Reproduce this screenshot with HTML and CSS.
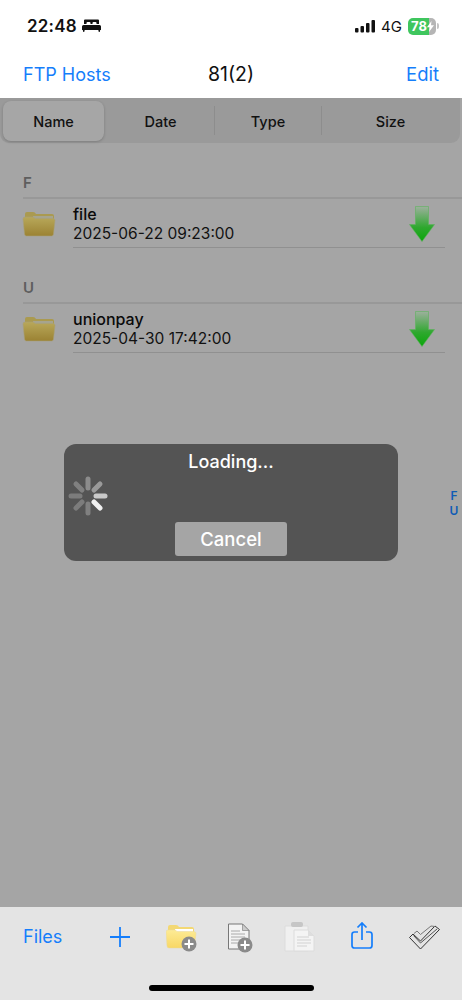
FILE: index.html
```html
<!DOCTYPE html>
<html lang="en">
<head>
<meta charset="utf-8">
<title>FTP</title>
<link rel="stylesheet" href="styles.css">
</head>
<body>
<div class="app">
  <header class="status">
    <div class="status-left">
      <span class="time">22:48</span>
      <svg class="bed" width="19" height="14" viewBox="0 0 19 14"><path fill="#111" d="M2 1.500Q2 .5 3 .5h13q1 0 1 1V5h-2.500V4q0-1-1-1h-2q-1 0-1 1v1h-2V4q0-1-1-1h-2q-1 0-1 1v1H2zM1.500 6h16Q19 6 19 7.500V11h-.8l-.5 2h-.9l-.5-2H2.700l-.5 2h-.9l-.5-2H0V7.500Q0 6 1.500 6z"/></svg>
    </div>
    <div class="status-right">
      <svg width="21" height="14" viewBox="0 0 21 14"><g fill="#111"><rect x="0" y="9" width="3.500" height="4.500" rx="1"/><rect x="5.500" y="7" width="3.500" height="6.500" rx="1"/><rect x="11" y="4" width="3.500" height="9.500" rx="1"/><rect x="16.500" y="1" width="3.500" height="12.500" rx="1"/></g></svg>
      <span class="net">4G</span>
      <div class="battery"><span class="battery-text">78</span><svg class="bolt" width="7" height="11" viewBox="0 0 7 11"><path fill="#fff" d="M4.500 0 0 6.300h2.700L2 11l5-6.700H4z"/></svg></div>
      <span class="battery-cap"></span>
    </div>
  </header>

  <nav class="nav">
    <a class="nav-link">FTP Hosts</a>
    <span class="nav-title">81(2)</span>
    <a class="nav-link nav-right">Edit</a>
  </nav>

  <main class="content">
    <div class="segments">
      <div class="seg seg-name seg-active">Name</div>
      <div class="seg seg-date">Date</div>
      <i class="seg-div"></i>
      <div class="seg seg-type">Type</div>
      <i class="seg-div"></i>
      <div class="seg seg-size">Size</div>
    </div>

    <section class="section">
      <h2 class="section-head">F</h2>
      <div class="row">
        <svg class="folder" width="34" height="28" viewBox="0 0 34 28"><defs><linearGradient id="fo" x1="0" y1="0" x2="0" y2="1"><stop offset="0" stop-color="#b8a85a"/><stop offset="1" stop-color="#9b8233"/></linearGradient></defs><path fill="#aa9a50" d="M3 4q0-2 2-2h6q2 0 3 2h16q2 0 2 2v4H3z"/><path fill="#a6a48e" d="M11 6h20v6H11z"/><path fill="url(#fo)" stroke="#a89f78" stroke-width=".6" d="M1 9q0-2 2-2h8q1 0 2 1.500h18q2 0 2 2L31.500 24q0 2-2 2h-25q-2 0-2-2z"/></svg>
        <div class="row-main">
          <div class="row-name">file</div>
          <div class="row-date">2025-06-22 09:23:00</div>
        </div>
        <svg class="down" width="26" height="36" viewBox="0 0 26 36"><defs><linearGradient id="ar" x1="0" y1="0" x2="0" y2="1"><stop offset="0" stop-color="#9db09d"/><stop offset=".6" stop-color="#2ea82e"/><stop offset="1" stop-color="#0aa60a"/></linearGradient></defs><path fill="url(#ar)" stroke="#5db45d" stroke-width=".6" d="M6.500.5h13V18.500H25.500L13 35.500.5 18.500H6.500z"/></svg>
      </div>
    </section>

    <section class="section">
      <h2 class="section-head">U</h2>
      <div class="row">
        <svg class="folder" width="34" height="28" viewBox="0 0 34 28"><path fill="#aa9a50" d="M3 4q0-2 2-2h6q2 0 3 2h16q2 0 2 2v4H3z"/><path fill="#a6a48e" d="M11 6h20v6H11z"/><path fill="url(#fo)" stroke="#a89f78" stroke-width=".6" d="M1 9q0-2 2-2h8q1 0 2 1.500h18q2 0 2 2L31.500 24q0 2-2 2h-25q-2 0-2-2z"/></svg>
        <div class="row-main">
          <div class="row-name">unionpay</div>
          <div class="row-date">2025-04-30 17:42:00</div>
        </div>
        <svg class="down" width="26" height="36" viewBox="0 0 26 36"><path fill="url(#ar)" stroke="#5db45d" stroke-width=".6" d="M6.500.5h13V18.500H25.500L13 35.500.5 18.500H6.500z"/></svg>
      </div>
    </section>

    <div class="index"><span>F</span><span>U</span></div>

    <div class="dialog">
      <div class="dialog-title">Loading...</div>
      <svg class="spinner" width="40" height="40" viewBox="0 0 40 40">
        <g stroke-width="5" stroke-linecap="round">
          <line x1="20" y1="3" x2="20" y2="12" stroke="#8c8c8c"/>
          <line x1="32" y1="8" x2="26" y2="14" stroke="#9a9a9a"/>
          <line x1="37" y1="20" x2="28" y2="20" stroke="#c9c9c9"/>
          <line x1="32" y1="32" x2="26" y2="26" stroke="#f0f0f0"/>
          <line x1="20" y1="37" x2="20" y2="28" stroke="#808080"/>
          <line x1="8" y1="32" x2="14" y2="26" stroke="#7c7c7c"/>
          <line x1="3" y1="20" x2="12" y2="20" stroke="#7c7c7c"/>
          <line x1="8" y1="8" x2="14" y2="14" stroke="#808080"/>
        </g>
      </svg>
      <button class="cancel">Cancel</button>
    </div>
  </main>

  <footer class="toolbar">
    <div class="tools">
      <a class="nav-link files">Files</a>
      <svg class="tool-plus" width="20" height="20" viewBox="0 0 20 20"><path stroke="#157efb" stroke-width="1.800" d="M10 0v20M0 10h20"/></svg>
      <svg class="tool-folder" width="32" height="28" viewBox="0 0 32 28"><defs><linearGradient id="fy" x1="0" y1="0" x2="0" y2="1"><stop offset="0" stop-color="#fdeb95"/><stop offset="1" stop-color="#f8d765"/></linearGradient></defs><path fill="#f3d873" d="M2 3q0-2 2-2h6q2 0 3 2h13q2 0 2 2v5H2z"/><path fill="#fff" d="M9 5h18v5H9z"/><path fill="url(#fy)" stroke="#e8d9a0" stroke-width=".5" d="M0 8q0-2 2-2h7q1 0 2 1.500h17q2 0 2 2L28.500 22q0 2-2 2H3q-2 0-2-2z"/><circle cx="23" cy="20" r="7.500" fill="#8a8a8a"/><path stroke="#fff" stroke-width="2" d="M23 15.500v9M18.500 20h9"/></svg>
      <svg class="tool-file" width="27" height="30" viewBox="0 0 27 30"><path fill="#f3f3f3" stroke="#777" d="M1.500 1h14L22 7.500V26H1.500z"/><path fill="#ccc" stroke="#777" stroke-width=".6" d="M15.500 1v6.500H22z"/><path stroke="#aaa" d="M4 8h9M4 11h14M4 14h14M4 17h11M4 20h9"/><circle cx="18" cy="22" r="7.500" fill="#8a8a8a"/><path stroke="#fff" stroke-width="2" d="M18 17.500v9M13.500 22h9"/></svg>
      <svg class="tool-paste" width="31" height="30" viewBox="0 0 31 30"><path fill="#f0f0f0" stroke="#dcdcdc" d="M1 4h23v25H1z"/><rect x="7" y="0" width="12" height="5" rx="2" fill="#c6c6c6"/><path fill="#f4f4f4" stroke="#dcdcdc" d="M10 8h14l6 6v15H10z"/><path fill="#dedede" d="M24 8v6h6z"/><path stroke="#d2d2d2" d="M13 15h12M13 18h14M13 21h14M13 24h10"/></svg>
      <svg class="tool-share" width="22" height="28" viewBox="0 0 22 28"><path fill="none" stroke="#157efb" stroke-width="1.700" d="M7 10H3.500Q1 10 1 12.500v11Q1 26 3.500 26h15q2.500 0 2.500-2.500v-11Q21 10 18.500 10H15M11 18V1.500M6.500 5.500 11 1l4.500 4.500"/></svg>
      <svg class="tool-check" width="32" height="25" viewBox="0 0 32 25"><g fill="none" stroke-width="1"><path stroke="#333" d="M.5 12.500 4 9l7.500 7L26 1l4.500 3.500-19 19.500z"/><path stroke="#777" d="M5 8.500 8 6l3.500 3.500L22 1l4 .5"/><path stroke="#555" d="M4.500 10.500 11.500 18 28 4"/></g></svg>
    </div>
    <div class="home-bar"></div>
  </footer>
</div>
</body>
</html>
```
FILE: styles.css
```css
* { box-sizing: border-box; margin: 0; padding: 0; }
html, body { width: 462px; height: 1000px; overflow: hidden; background: #fff; }
body { font-family: Inter, "Liberation Sans", sans-serif; color: #111; }
.app { width: 462px; height: 1000px; display: flex; flex-direction: column; }

.status { height: 50px; flex: none; display: flex; justify-content: space-between; align-items: center; padding: 2px 0 0 27px; }
.status-left { display: flex; align-items: center; gap: 5px; }
.time { font-size: 17px; font-weight: 600; letter-spacing: .2px; }
.bed { display: block; }
.status-right { display: flex; align-items: center; padding-right: 23px; }
.net { font-size: 15px; margin: 0 7px 0 5px; width: 20px; }
.battery { width: 28px; height: 17px; border-radius: 5px; background: linear-gradient(90deg, #3fc65e 0 76%, #b5b5b5 76%); display: flex; align-items: center; padding-left: 3px; color: #fff; }
.battery-text { font-size: 13px; font-weight: 700; line-height: 17px; }
.battery-cap { width: 2px; height: 6px; background: #c4c4c4; border-radius: 0 2px 2px 0; margin-left: 1px; }

.nav { height: 48px; flex: none; display: grid; grid-template-columns: 1fr auto 1fr; align-items: center; padding: 0 23px; }
.nav-link { color: #157efb; font-size: 18px; }
.nav-right { justify-self: end; font-size: 18.500px; }
.nav-title { font-size: 19.500px; color: #111; }

.content { flex: 1; background: #a5a5a5; position: relative; display: flex; flex-direction: column; }

.segments { height: 45px; width: 460px; flex: none; background: #9a9a9a; border-radius: 0 0 9px 9px; display: flex; align-items: center; padding: 0 3px; font-size: 14.500px; font-weight: 500; color: #111; }
.seg { text-align: center; line-height: 41px; height: 40px; }
.seg-active { background: #a6a6a6; border-radius: 8px; box-shadow: 0 1px 3px rgba(0,0,0,.2); }
.seg-name { width: 101px; }
.seg-date { width: 110px; padding-left: 3px; }
.seg-type { width: 106px; }
.seg-size { flex: 1; padding-left: 2px; }
.seg-div { width: 1px; height: 29px; background: #8d8d8d; flex: none; }

.section { display: flex; flex-direction: column; margin-top: 30px; }
.section-head { font-size: 15px; font-weight: 600; color: #5e5e5e; padding-left: 23px; height: 26px; line-height: 20px; position: relative; }
.section-head::after { content: ""; position: absolute; left: 23px; right: 0; bottom: 0; height: 2px; background: #989898; }
.row { height: 49px; margin: 0 17px 0 23px; display: flex; align-items: center; position: relative; }
.folder { flex: none; margin-left: -1px; margin-right: 17px; }
.row-main { flex: 1; height: 49px; display: flex; flex-direction: column; justify-content: center; border-bottom: 1px solid #909090; padding-top: 1px; }
.row-name { font-size: 16px; font-weight: 500; line-height: 20px; color: #0a0a0a; }
.row-date { font-size: 15.500px; line-height: 20px; color: #111; }
.down { position: absolute; right: 10px; top: 7px; }

.index { position: absolute; left: 448px; top: 390px; width: 12px; display: flex; flex-direction: column; align-items: center; font-size: 12px; font-weight: 600; line-height: 15px; color: #0f5cb5; }

.dialog { position: absolute; left: 64px; top: 346px; width: 334px; height: 117px; background: #545454; border-radius: 12px; }
.dialog-title { color: #fff; text-align: center; font-size: 18px; font-weight: 500; line-height: 20px; margin-top: 8px; }
.spinner { position: absolute; left: 4px; top: 32px; }
.cancel { position: absolute; left: 111px; top: 78px; width: 112px; height: 34px; border: 0; border-radius: 3px; background: #a5a5a5; color: #fff; font: 500 18.500px Inter, "Liberation Sans", sans-serif; }

.toolbar { height: 93px; flex: none; background: #e4e4e4; position: relative; }
.tools { position: relative; height: 60px; }
.files { position: absolute; left: 23px; top: 19px; }
.tool-plus { position: absolute; left: 110px; top: 20px; }
.tool-folder { position: absolute; left: 166px; top: 17px; }
.tool-file { position: absolute; left: 227px; top: 16px; }
.tool-paste { position: absolute; left: 284px; top: 15px; }
.tool-share { position: absolute; left: 351px; top: 15px; }
.tool-check { position: absolute; left: 409px; top: 18px; }
.home-bar { position: absolute; left: 149px; top: 78px; width: 165px; height: 6px; border-radius: 3px; background: #000; }
```
